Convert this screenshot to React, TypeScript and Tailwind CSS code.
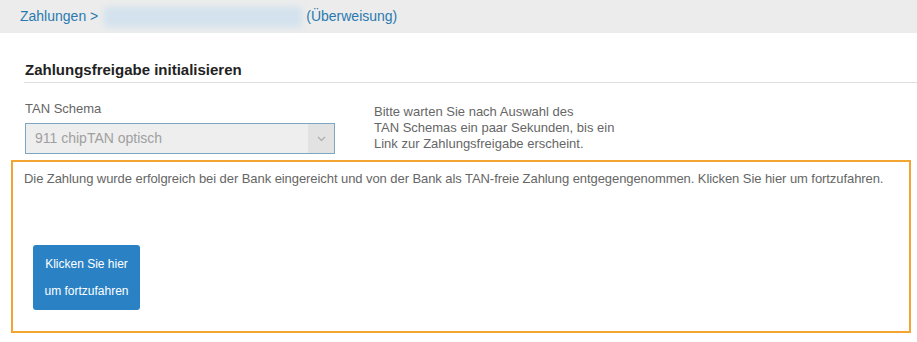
export default function App() {
  return (
    <div className="w-[917px] h-[342px] bg-white font-['Liberation_Sans',Arial,sans-serif] overflow-hidden">
      <div className="h-[33px] bg-[#ececec] flex items-center pl-5 text-[14px] text-[#2a7ab0]">
        <span>Zahlungen &gt;</span>
        <span className="ml-[6px] w-[198px] h-[20px] bg-[#d3e2ee] blur-[3px] rounded"></span>
        <span className="ml-[4px]">(Überweisung)</span>
      </div>

      <div className="pl-[24px] pt-[28px]">
        <h2 className="font-bold text-[15px] leading-[18px] text-[#222] pl-[1px] pb-[3px] border-b border-[#dedede]">
          Zahlungsfreigabe initialisieren
        </h2>
      </div>

      <div className="flex pl-[25px] pt-[18px]">
        <div className="w-[310px]">
          <div className="text-[13px] text-[#666] leading-[16px]">TAN Schema</div>
          <div className="mt-[6px] h-[31px] flex border border-[#7ba6c4] bg-[#eeeeee]">
            <div className="flex-1 pl-[9px] flex items-center text-[14px] text-[#a0a0a0]">911 chipTAN optisch</div>
            <div className="w-[26px] bg-[#e2e2e2] flex items-center justify-center">
              <svg width="9" height="6" viewBox="0 0 9 6" fill="none">
                <path d="M1 1l3.5 3.5L8 1" stroke="#aaa" strokeWidth="1.2" />
              </svg>
            </div>
          </div>
        </div>
        <div className="ml-[39px] pt-[3px] text-[13px] leading-[16px] text-[#666]">
          Bitte warten Sie nach Auswahl des
          <br />
          TAN Schemas ein paar Sekunden, bis ein
          <br />
          Link zur Zahlungsfreigabe erscheint.
        </div>
      </div>

      <div className="ml-[11px] mt-[6px] w-[900px] h-[173px] border-2 border-[#f2a531] pl-[11px] pt-[9px]">
        <p className="text-[13px] tracking-[-0.07px] text-[#666] leading-[16px]">
          Die Zahlung wurde erfolgreich bei der Bank eingereicht und von der Bank als TAN-freie Zahlung entgegengenommen. Klicken Sie hier um fortzufahren.
        </p>
        <button className="mt-[58px] ml-[9px] w-[107px] h-[65px] bg-[#2a82c4] rounded-[3px] text-white text-[12px] leading-[27px]">
          Klicken Sie hier
          <br />
          um fortzufahren
        </button>
      </div>
    </div>
  );
}
